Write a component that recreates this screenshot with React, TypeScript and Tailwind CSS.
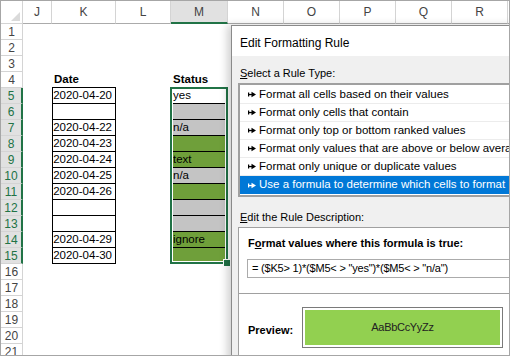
import React from 'react';

type Fill = 'white' | 'gray' | 'green';

const dates: Record<number, string> = {
  5: '2020-04-20',
  6: '',
  7: '2020-04-22',
  8: '2020-04-23',
  9: '2020-04-24',
  10: '2020-04-25',
  11: '2020-04-26',
  12: '',
  13: '',
  14: '2020-04-29',
  15: '2020-04-30',
};

const status: Record<number, [string, Fill]> = {
  5: ['yes', 'white'],
  6: ['', 'gray'],
  7: ['n/a', 'gray'],
  8: ['', 'green'],
  9: ['text', 'green'],
  10: ['n/a', 'gray'],
  11: ['', 'green'],
  12: ['', 'gray'],
  13: ['', 'gray'],
  14: ['ignore', 'green'],
  15: ['', 'green'],
};

const fillClass: Record<Fill, string> = {
  white: 'bg-white',
  gray: 'bg-[#c4c4c4]',
  green: 'bg-[#6f9f3a]',
};

const rules = [
  'Format all cells based on their values',
  'Format only cells that contain',
  'Format only top or bottom ranked values',
  'Format only values that are above or below average',
  'Format only unique or duplicate values',
  'Use a formula to determine which cells to format',
];

const headerCols = [
  { id: 'J', w: 'w-[29px]' },
  { id: 'K', w: 'w-[64px]' },
  { id: 'L', w: 'w-[55px]' },
  { id: 'M', w: 'w-[57px]' },
  { id: 'N', w: 'w-[56px]' },
  { id: 'O', w: 'w-[56px]' },
  { id: 'P', w: 'w-[56px]' },
  { id: 'Q', w: 'w-[56px]' },
  { id: 'R', w: 'w-[56px]' },
];

const RuleArrow = ({ white }: { white?: boolean }) => (
  <svg width="8" height="7" viewBox="0 0 8 7" className="shrink-0">
    <g fill={white ? '#ffffff' : '#000000'}>
      <rect x="0" y="1.5" width="1.2" height="4" />
      <rect x="0" y="2.9" width="4" height="1.3" />
      <polygon points="3.5,0.8 8,3.5 3.5,6.2" />
    </g>
  </svg>
);

const Sheet = () => {
  const rows = Array.from({ length: 21 }, (_, i) => i + 1);
  return (
    <div className="flex flex-col">
      <div className="flex h-[23px] bg-white text-[12px] text-[#444]">
        <div className="w-[22px] shrink-0 border-r border-b border-[#d4d4d4] relative">
          <div className="absolute right-[2px] bottom-[2px] w-0 h-0 border-l-[9px] border-l-transparent border-b-[9px] border-b-[#dadada]" />
        </div>
        {headerCols.map((c) => (
          <div
            key={c.id}
            className={`${c.w} shrink-0 flex items-center justify-center border-r border-[#d4d4d4] ${
              c.id === 'M' ? 'bg-[#e1e1e1] border-b-2 border-b-[#217346]' : 'border-b border-b-[#ababab]'
            }`}
          >
            {c.id}
          </div>
        ))}
        <div className="flex-1 border-b border-b-[#ababab]" />
      </div>
      {rows.map((r) => {
        const sel = r >= 5 && r <= 15;
        const st = status[r];
        return (
          <div key={r} className="flex h-[16px] shrink-0">
            <div
              className={`w-[22px] shrink-0 flex items-center justify-center text-[12px] border-b border-[#d4d4d4] ${
                sel ? 'bg-[#e1e1e1] text-[#217346] border-r-2 border-r-[#217346]' : 'bg-white text-[#444] border-r'
              }`}
            >
              {r}
            </div>
            <div className="w-[29px] shrink-0" />
            <div
              className={`w-[64px] shrink-0 flex items-center text-[11.5px] ${
                r === 4 ? 'border-b border-black font-bold pl-[2px]' : ''
              } ${sel ? 'border-x border-b border-black justify-end pr-[3px]' : ''}`}
            >
              {r === 4 ? 'Date' : dates[r] ?? ''}
            </div>
            <div className="w-[55px] shrink-0" />
            <div
              className={`w-[57px] shrink-0 flex items-center text-[11.5px] pl-[2px] ${
                r === 4 ? 'font-bold' : ''
              } ${st ? `${fillClass[st[1]]} border-b border-black` : ''}`}
            >
              {r === 4 ? 'Status' : st ? st[0] : ''}
            </div>
            <div className="flex-1" />
          </div>
        );
      })}
    </div>
  );
};

const Dialog = () => (
  <div className="absolute left-[230px] top-[24px] w-[320px] h-[340px] border border-[#8a8a8a] bg-[#f0f0f0] shadow-[-4px_0_8px_rgba(0,0,0,0.18)] text-[12px] text-black">
    <div className="h-[30px] bg-white flex items-center pl-[8px] pt-[3px]">Edit Formatting Rule</div>
    <div className="px-[6px]">
      <div className="pt-[10px] h-[25px] leading-[15px] pl-[2px] text-[11px]">
        <span className="underline">S</span>elect a Rule Type:
      </div>
      <div className="mt-[2px] border-2 border-[#a0a0a0] bg-white py-px text-[11.5px]">
        {rules.map((t, i) => {
          const on = i === rules.length - 1;
          return (
            <div
              key={t}
              className={`h-[18px] flex items-center gap-[3px] pl-[8px] whitespace-nowrap ${
                on ? 'bg-[#0078d7] text-white' : 'border-b border-[#ececec]'
              }`}
            >
              <RuleArrow white={on} />
              <span>{t}</span>
            </div>
          );
        })}
      </div>
      <div className="mt-[13px] h-[15px] leading-[15px] pl-[2px] text-[11px]">
        <span className="underline">E</span>dit the Rule Description:
      </div>
      <div className="mt-[2px] border border-[#a0a0a0] bg-white h-[200px]">
        <div className="pl-[8px] pt-[8px] pb-[15px]">
          <div className="h-[15px] leading-[15px] pl-px font-bold text-[11px]">
            F<span className="underline">o</span>rmat values where this formula is true:
          </div>
          <div className="mt-[8px] h-[19px] w-[300px] border border-[#ababab] bg-white pl-[4px] leading-[17px] whitespace-nowrap text-[11px] tracking-[-0.2px]">
            = ($K5&gt; 1)*($M5&lt; &gt; "yes")*($M5&lt; &gt; "n/a")
          </div>
        </div>
        <div className="border-t border-[#a0a0a0] pt-[13px] flex items-center">
          <div className="w-[63px] shrink-0 pl-[9px] pt-[5px] font-bold text-[11px]">Preview:</div>
          <div className="w-[201px] h-[41px] border border-[#7a7a7a] p-[2px] bg-white">
            <div className="w-full h-full bg-[#92d050] flex items-center justify-center text-[11px] tracking-[-0.3px] text-[#222]">
              AaBbCcYyZz
            </div>
          </div>
        </div>
      </div>
    </div>
  </div>
);

export default function App() {
  return (
    <div className="w-[510px] h-[356px] border border-[#a6a6a6] bg-white relative overflow-hidden font-['Liberation_Sans',Arial,sans-serif]">
      <Sheet />
      <div className="absolute left-[169px] top-[86px] w-[58px] h-[177px] border-2 border-[#217346] shadow-[inset_0_0_0_1px_#ffffff]" />
      <div className="absolute left-[223px] top-[259px] w-[6px] h-[6px] bg-[#217346] outline outline-1 outline-white" />
      <Dialog />
    </div>
  );
}
